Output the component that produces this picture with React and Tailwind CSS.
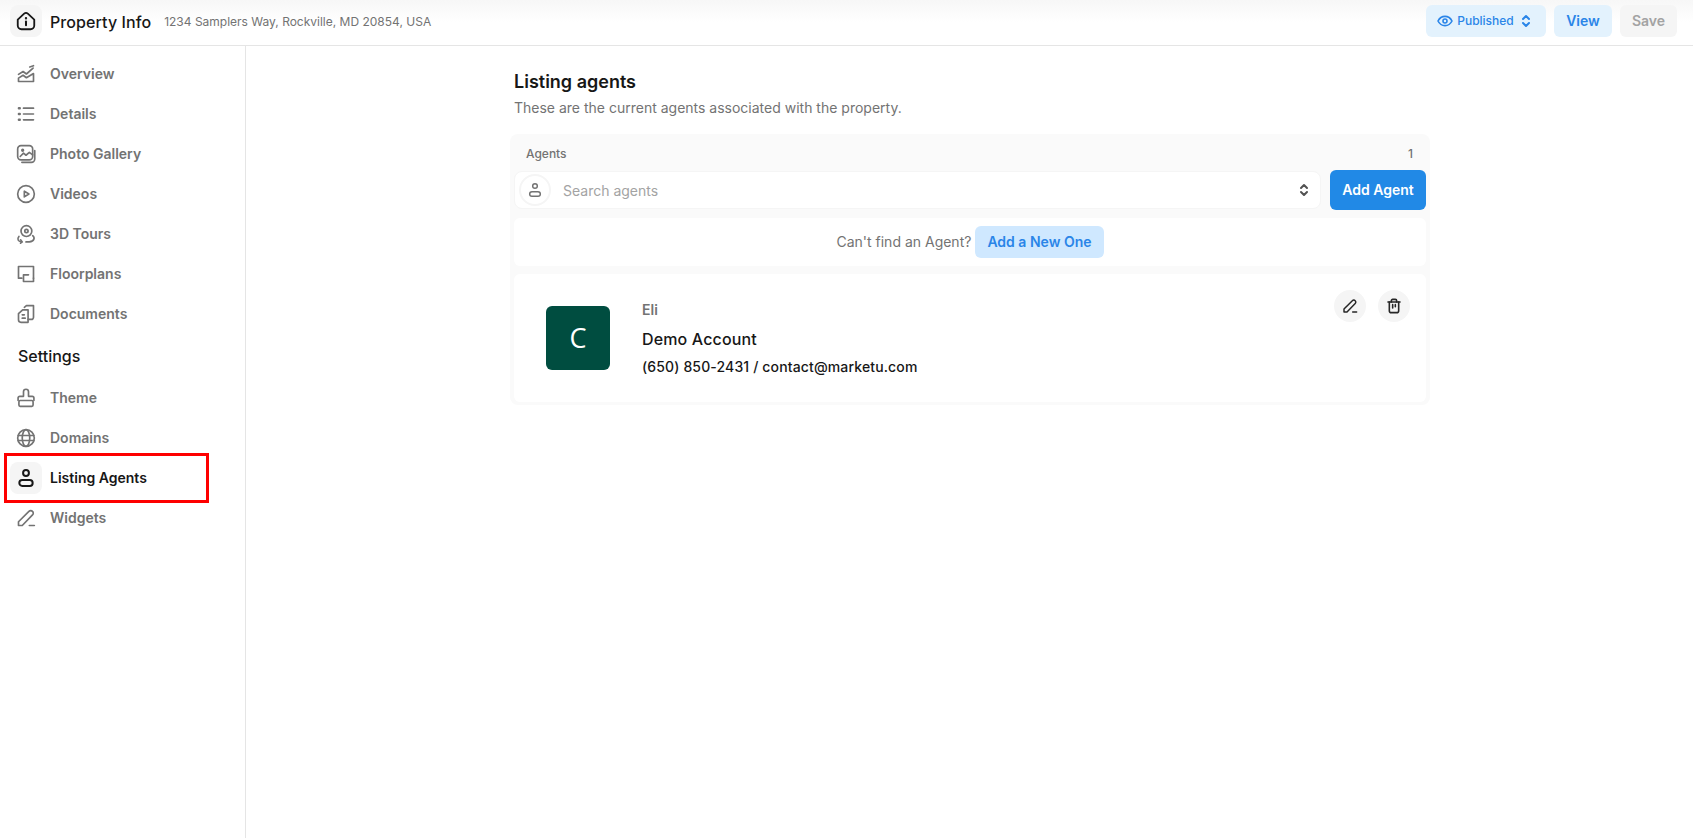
import React from "react";

const Svg = ({ size = 20, children, className = "" }) => (
    <svg width={size} height={size} viewBox="0 0 24 24" fill="none" stroke="currentColor" strokeWidth="2" strokeLinecap="round" strokeLinejoin="round" className={className}>
        {children}
    </svg>
);

const HomeInfoIcon = () => (
    <Svg size={22}>
        <path d="M3 10.500 10 4a3 3 0 0 1 4 0l7 6.500V17a4 4 0 0 1-4 4H7a4 4 0 0 1-4-4z" strokeWidth="2" />
        <path d="M12 12.500v4" strokeWidth="2.200" />
        <circle cx="12" cy="9" r="0.500" fill="currentColor" strokeWidth="1.600" />
    </Svg>
);

const OverviewIcon = () => (
    <Svg>
        <path d="M3 12.500 8.500 9l4 3 8-7" />
        <path d="M16.500 3.500 21 2" />
        <path d="M3 21v-4l5.500-3.500 4 3 8.500-5V21z" />
    </Svg>
);

const DetailsIcon = () => (
    <Svg>
        <path d="M9 5h12M9 12h12M9 19h12" />
        <path d="M3.500 5h1M3.500 12h1M3.500 19h1" strokeWidth="3" />
    </Svg>
);

const GalleryIcon = () => (
    <Svg>
        <rect x="2" y="2" width="18" height="17" rx="4" />
        <path d="M5 15l4-4 3 2.500 4-3.500 4 3" />
        <circle cx="8" cy="7.500" r="1" />
        <path d="M22.500 8v10a4 4 0 0 1-4 4H7" />
    </Svg>
);

const VideoIcon = () => (
    <Svg>
        <circle cx="12" cy="12" r="10" />
        <path d="M10 8.500v7l5.500-3.500z" />
    </Svg>
);

const ToursIcon = () => (
    <Svg>
        <circle cx="12.500" cy="8.500" r="6.500" />
        <circle cx="12.500" cy="8.500" r="2" />
        <path d="M3.500 15c-2.500 3-1 6 3 6.500" />
        <path d="M5.500 19l2 2.500-2 1.500" />
        <path d="M20 14c3 2.500 2 7-4 7.500h-4" />
    </Svg>
);

const FloorplanIcon = () => (
    <Svg>
        <path d="M7 17H3V3h18v14" />
        <path d="M21 17v4H9v-8h6" />
    </Svg>
);

const DocumentsIcon = () => (
    <Svg>
        <path d="M3 11.500 8 7h6.500v15H6a3 3 0 0 1-3-3z" />
        <path d="M10 4l2.500-2H21v14a2.500 2.500 0 0 1-2.500 2.500h-4" />
        <path d="M7.500 13h2.500M7.500 17h3.500" />
    </Svg>
);

const ThemeIcon = () => (
    <Svg>
        <rect x="3.500" y="15" width="17" height="7" rx="1.500" />
        <path d="M2.500 15v-3a2 2 0 0 1 2-2H9V4.500a3 3 0 0 1 6 0V10h4.500a2 2 0 0 1 2 2v3" />
    </Svg>
);

const GlobeIcon = () => (
    <Svg>
        <circle cx="12" cy="12" r="10" />
        <ellipse cx="12" cy="12" rx="4.500" ry="10" />
        <path d="M2.500 9h19M2.500 15h19" />
    </Svg>
);

const AgentIcon = ({ size = 20, width = 2.400 }) => (
    <Svg size={size}>
        <circle cx="12" cy="6" r="3.500" strokeWidth={width} />
        <rect x="4" y="14.500" width="16" height="7" rx="3.500" strokeWidth={width} />
    </Svg>
);

const PenIcon = ({ size = 20, width = 2 }) => (
    <Svg size={size}>
        <path d="M3 21v-4.500L15.500 4a3 3 0 0 1 4.300 0 3 3 0 0 1 0 4.300L7.500 21z" strokeWidth={width} />
        <path d="M16 21h6" strokeWidth={width} />
    </Svg>
);

const TrashIcon = () => (
    <Svg size={16} className="text-[#262626]">
        <path d="M3 6h18" strokeWidth="2.400" />
        <path d="M8 6V4a2 2 0 0 1 2-2h4a2 2 0 0 1 2 2v2" strokeWidth="2.400" />
        <path d="M5 6v13a3 3 0 0 0 3 3h8a3 3 0 0 0 3-3V6" strokeWidth="2.400" />
        <path d="M10 10v5M14 10v3" strokeWidth="2.400" />
    </Svg>
);

const EyeIcon = () => (
    <Svg size={16}>
        <path d="M1.500 12C4 7 8 5 12 5s8 2 10.500 7C20 17 16 19 12 19s-8-2-10.500-7z" strokeWidth="2.400" />
        <circle cx="12" cy="12" r="3" strokeWidth="2.400" />
    </Svg>
);

const UpDownIcon = ({ className = "" }) => (
    <Svg size={16} className={className}>
        <path d="M7.500 9 12 4.500 16.500 9M7.500 15l4.500 4.500 4.500-4.500" strokeWidth="3" />
    </Svg>
);

const topLinks = [
    { label: "Overview", icon: <OverviewIcon /> },
    { label: "Details", icon: <DetailsIcon /> },
    { label: "Photo Gallery", icon: <GalleryIcon /> },
    { label: "Videos", icon: <VideoIcon /> },
    { label: "3D Tours", icon: <ToursIcon /> },
    { label: "Floorplans", icon: <FloorplanIcon /> },
    { label: "Documents", icon: <DocumentsIcon /> },
];

const settingsLinks = [
    { label: "Theme", icon: <ThemeIcon /> },
    { label: "Domains", icon: <GlobeIcon /> },
    { label: "Listing Agents", icon: <AgentIcon />, active: true },
    { label: "Widgets", icon: <PenIcon /> },
];

const NavItem = ({ label, icon, active }) => (
    <a className={`relative flex h-[40px] items-center gap-2 pl-[10px] text-sm font-semibold ${active ? "text-[#171717]" : "text-[#737373]"}`}>
        <span className={`flex h-8 w-8 items-center justify-center rounded-lg ${active ? "bg-[#f5f5f5]" : ""}`}>
            {icon}
        </span>
        {label}
        {active && <span className="absolute left-[4px] top-[-5px] h-[50px] w-[205px] border-[3px] border-[#fe0000]" />}
    </a>
);

const App = () => {
    return (
        <div className="flex h-[838px] flex-col overflow-hidden bg-white font-['Inter',sans-serif] text-[#171717]">
            <header className="flex h-[46px] shrink-0 items-center border-b border-[#e5e5e5] bg-gradient-to-b from-[#f7f7f7] via-white to-white pb-[3px] pl-[10px] pr-[16px]">
                <span className="flex h-8 w-8 items-center justify-center rounded-lg bg-[#f5f5f5]">
                    <HomeInfoIcon />
                </span>
                <h1 className="ml-2 pt-[1px] text-base font-medium tracking-[0.08px]">Property Info</h1>
                <span className="ml-[13px] pt-[1px] text-xs text-[#737373]">1234 Samplers Way, Rockville, MD 20854, USA</span>
                <div className="ml-auto flex items-center gap-2">
                    <button className="flex h-8 w-[120px] items-center justify-center gap-1 rounded-md bg-[#e3f2fd] pr-[1px] text-xs font-medium text-[#2a85e8]">
                        <EyeIcon />
                        Published
                        <UpDownIcon />
                    </button>
                    <button className="h-8 w-[58px] rounded-md bg-[#e3f2fd] text-sm font-semibold text-[#2a85e8]">View</button>
                    <button className="h-8 w-[57px] rounded-md bg-[#f5f5f5] text-sm font-semibold text-[#a3a3a3]">Save</button>
                </div>
            </header>
            <div className="flex flex-1">
                <aside className="w-[246px] shrink-0 border-r border-[#e5e5e5] pt-[8px]">
                    {topLinks.map(link => (
                        <NavItem key={link.label} {...link} />
                    ))}
                    <h2 className="flex h-[44px] items-center pl-[18px] text-base font-medium">Settings</h2>
                    {settingsLinks.map(link => (
                        <NavItem key={link.label} {...link} />
                    ))}
                </aside>
                <main className="flex-1 pl-[264px] pt-[24px]">
                    <div className="w-[920px]">
                        <h2 className="pl-[4px] text-lg font-semibold leading-[24px]">Listing agents</h2>
                        <p className="mt-[4px] pl-[4px] text-sm leading-[20px] text-[#737373]">These are the current agents associated with the property.</p>
                        <section className="mt-[16px] rounded-lg bg-[#fafafa] px-[4px] pb-[3px]">
                            <div className="flex h-[36px] items-center justify-between pl-[12px] pr-[13px] pt-[4px] text-xs font-medium text-[#737373]">
                                <span>Agents</span>
                                <span>1</span>
                            </div>
                            <div className="flex items-center gap-[9px]">
                                <div className="flex h-[38px] flex-1 items-center rounded-lg border border-[#f5f5f5] bg-white pl-[4px] pr-[8px]">
                                    <span className="flex h-8 w-8 items-center justify-center rounded-full border-2 border-[#f5f5f5] pr-[1px] text-[#737373]">
                                        <AgentIcon size={16} width={2.200} />
                                    </span>
                                    <span className="ml-[12px] flex-1 pt-[2px] text-sm text-[#a3a3a3]">Search agents</span>
                                    <UpDownIcon className="text-[#525252]" />
                                </div>
                                <button className="h-10 w-[96px] rounded-md bg-[#2189e6] text-sm font-semibold text-white">Add Agent</button>
                            </div>
                            <div className="mt-[8px] flex h-[48px] items-center justify-center gap-[4px] rounded-md bg-white text-sm text-[#737373]">
                                <span>Can't find an Agent?</span>
                                <button className="h-8 rounded-md bg-[#cfe8ff] px-3 text-sm font-semibold text-[#2a85e8]">Add a New One</button>
                            </div>
                            <div className="relative mt-[8px] flex h-[128px] items-center rounded-md bg-white pl-[32px]">
                                <div className="flex h-16 w-16 items-center justify-center rounded-md bg-[#004d40] font-['Open_Sans',sans-serif] text-[27px] text-white">C</div>
                                <div className="ml-[32px] mt-[-1px]">
                                    <div className="pt-[1px] text-sm font-semibold leading-[19px] text-[#737373]">Eli</div>
                                    <div className="mt-[10px] text-base font-medium leading-[20px] tracking-[0.15px]">Demo Account</div>
                                    <div className="mt-[8px] text-sm font-medium leading-[20px] tracking-[0.14px]">(650) 850-2431 / contact@marketu.com</div>
                                </div>
                                <div className="absolute right-[16px] top-[16px] flex gap-[12px]">
                                    <button className="flex h-8 w-8 items-center justify-center rounded-full bg-[#f5f5f5] text-[#262626]">
                                        <PenIcon size={16} width={2.200} />
                                    </button>
                                    <button className="flex h-8 w-8 items-center justify-center rounded-full bg-[#f5f5f5]">
                                        <TrashIcon />
                                    </button>
                                </div>
                            </div>
                        </section>
                    </div>
                </main>
            </div>
        </div>
    );
};

export default App;
